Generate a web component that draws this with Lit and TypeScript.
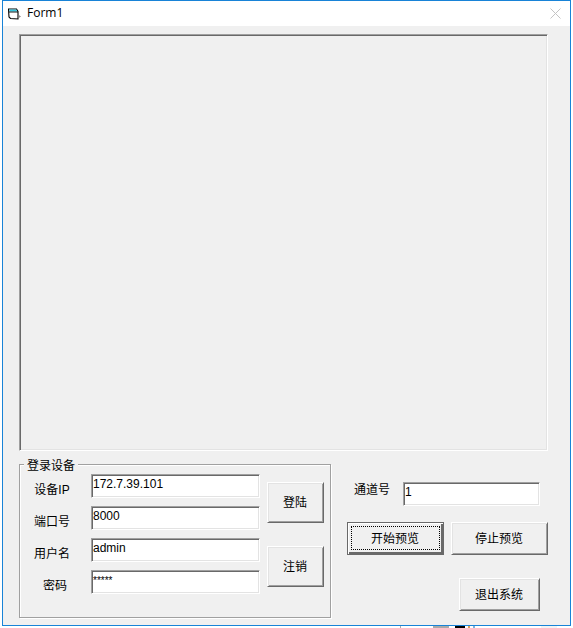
import { LitElement, html, css } from "lit";
import { customElement } from "lit/decorators.js";

const FIELDS = [
  { label: "设备IP", value: "172.7.39.101" },
  { label: "端口号", value: "8000" },
  { label: "用户名", value: "admin" },
  { label: "密码", value: "*****", narrow: true },
];

const STRIP = [
  { x: 400, w: 1, c: "#a8a8a8" },
  { x: 433, w: 16, c: "#a9a9a9" },
  { x: 455, w: 10, c: "#000000" },
  { x: 468, w: 2, c: "#d9a35c" },
  { x: 473, w: 2, c: "#7fb2dc" },
  { x: 541, w: 16, c: "#f3f3f3" },
];

@customElement("app-root")
export class AppRoot extends LitElement {
  static styles = css`
    :host {
      display: block;
      width: 573px;
      height: 628px;
      background: #fff;
      overflow: hidden;
      font-family: "Liberation Sans", "Noto Sans CJK SC", sans-serif;
      font-size: 12px;
      line-height: 14px;
      color: #000;
    }
    .window {
      box-sizing: border-box;
      margin-left: 2px;
      width: 569px;
      height: 626px;
      border: 1px solid #1883d7;
      display: flex;
      flex-direction: column;
      background: #f0f0f0;
    }
    .titlebar {
      height: 25px;
      flex: none;
      background: #fff;
      display: flex;
      align-items: center;
      padding-left: 5px;
      padding-right: 9px;
    }
    .app-icon { width: 15px; height: 13px; flex: none; }
    .title {
      margin-left: 4px;
      padding-bottom: 2px;
      font-family: "Open Sans", sans-serif;
      font-size: 12px;
      flex: 1;
    }
    .close { width: 11px; height: 11px; flex: none; margin-bottom: 1px; }
    .client {
      flex: 1;
      padding: 8px 0 0 16px;
      display: flex;
      flex-direction: column;
    }
    .sunken {
      box-sizing: border-box;
      border: 1px solid;
      border-color: #a0a0a0 #fff #fff #a0a0a0;
      box-shadow: inset 1px 1px 0 #696969, inset -1px -1px 0 #e3e3e3;
    }
    .preview {
      width: 529px;
      height: 417px;
      flex: none;
    }
    .bottom {
      display: flex;
      margin-top: 13px;
    }
    .group {
      position: relative;
      box-sizing: border-box;
      width: 312px;
      height: 154px;
      border: 1px solid #a0a0a0;
      box-shadow: inset 1px 1px 0 #fff, 1px 1px 0 #fff;
      padding: 9px 0 0 13px;
      display: flex;
      flex: none;
    }
    .legend {
      position: absolute;
      left: 4px;
      top: -6px;
      padding: 0 3px;
      background: #f0f0f0;
    }
    .fields {
      display: flex;
      flex-direction: column;
      gap: 8px;
    }
    .row { display: flex; }
    .label {
      width: 38px;
      margin-right: 20px;
      padding-top: 9px;
      text-align: center;
      white-space: nowrap;
    }
    .label.narrow { padding-left: 6px; box-sizing: border-box; }
    .input {
      background: #fff;
      height: 24px;
      padding: 2px 0 0 1px;
    }
    .fields .input { width: 169px; }
    .small { font-size: 10px; line-height: 12px; padding-top: 4px; }
    .group-buttons {
      display: flex;
      flex-direction: column;
      gap: 23px;
      margin: 8px 0 0 7px;
    }
    .btn {
      box-sizing: border-box;
      border: 1px solid;
      border-color: #fff #696969 #696969 #fff;
      box-shadow: inset 1px 1px 0 #e3e3e3, inset -1px -1px 0 #a0a0a0;
      background: #f0f0f0;
      display: flex;
      align-items: center;
      justify-content: center;
      white-space: nowrap;
    }
    .group-buttons .btn { width: 57px; height: 41px; padding-right: 1px; }
    .right {
      margin-left: 16px;
      padding-top: 18px;
      display: flex;
      flex-direction: column;
    }
    .channel { display: flex; align-items: flex-start; }
    .channel-label { width: 37px; margin: 1px 12px 0 7px; white-space: nowrap; }
    .channel .input { width: 137px; }
    .preview-buttons {
      display: flex;
      gap: 7px;
      margin-top: 16px;
    }
    .preview-buttons .btn { width: 97px; height: 33px; padding-right: 1px; }
    .btn.default {
      position: relative;
      outline: 1px solid #696969;
      outline-offset: -1px;
      border-bottom-color: #555;
      border-right-color: #555;
      box-shadow: inset 1px 1px 0 #fff, inset -2px -2px 0 #696969;
    }
    .focus {
      position: absolute;
      inset: 3px 3px 4px 3px;
      border: 1px dotted #000;
    }
    .exit-row {
      display: flex;
      margin-top: 23px;
      padding-left: 112px;
    }
    .exit-row .btn { width: 81px; height: 33px; padding-right: 1px; }
    .strip { position: relative; height: 2px; }
    .strip span { position: absolute; top: 0; height: 2px; }
  `;

  render() {
    return html`
      <div class="window">
        <div class="titlebar">
          <svg class="app-icon" viewBox="0 0 15 13">
            <path d="M0.5 2H8.5L10 4.5V12L2.5 11.5L1 10Z" fill="#fff" stroke="#000" stroke-width="1.1" stroke-linejoin="miter"></path>
            <path d="M1.2 2.6H8.2L9.4 4.6H1.4Z" fill="#35c4dc"></path>
            <path d="M1 5H10" stroke="#000" stroke-width="0.9"></path>
            <path d="M10.8 8L13 9.5L10.8 11Z" fill="#8a8a8a"></path>
          </svg>
          <div class="title">Form1</div>
          <svg class="close" viewBox="0 0 11 11">
            <path d="M0.5 0.5L10.5 10.5M10.5 0.5L0.5 10.5" stroke="#c4c4c4" stroke-width="1"></path>
          </svg>
        </div>
        <div class="client">
          <div class="preview sunken"></div>
          <div class="bottom">
            <div class="group">
              <div class="legend">登录设备</div>
              <div class="fields">
                ${FIELDS.map(
                  (f) => html`
                    <div class="row">
                      <div class="label ${f.narrow ? "narrow" : ""}">${f.label}</div>
                      <div class="input sunken ${f.narrow ? "small" : ""}">${f.value}</div>
                    </div>
                  `
                )}
              </div>
              <div class="group-buttons">
                <div class="btn">登陆</div>
                <div class="btn">注销</div>
              </div>
            </div>
            <div class="right">
              <div class="channel">
                <div class="channel-label">通道号</div>
                <div class="input sunken">1</div>
              </div>
              <div class="preview-buttons">
                <div class="btn default"><span class="focus"></span>开始预览</div>
                <div class="btn">停止预览</div>
              </div>
              <div class="exit-row">
                <div class="btn">退出系统</div>
              </div>
            </div>
          </div>
        </div>
      </div>
      <div class="strip">
        ${STRIP.map(
          (s) => html`<span style="left:${s.x}px;width:${s.w}px;background:${s.c}"></span>`
        )}
      </div>
    `;
  }
}
